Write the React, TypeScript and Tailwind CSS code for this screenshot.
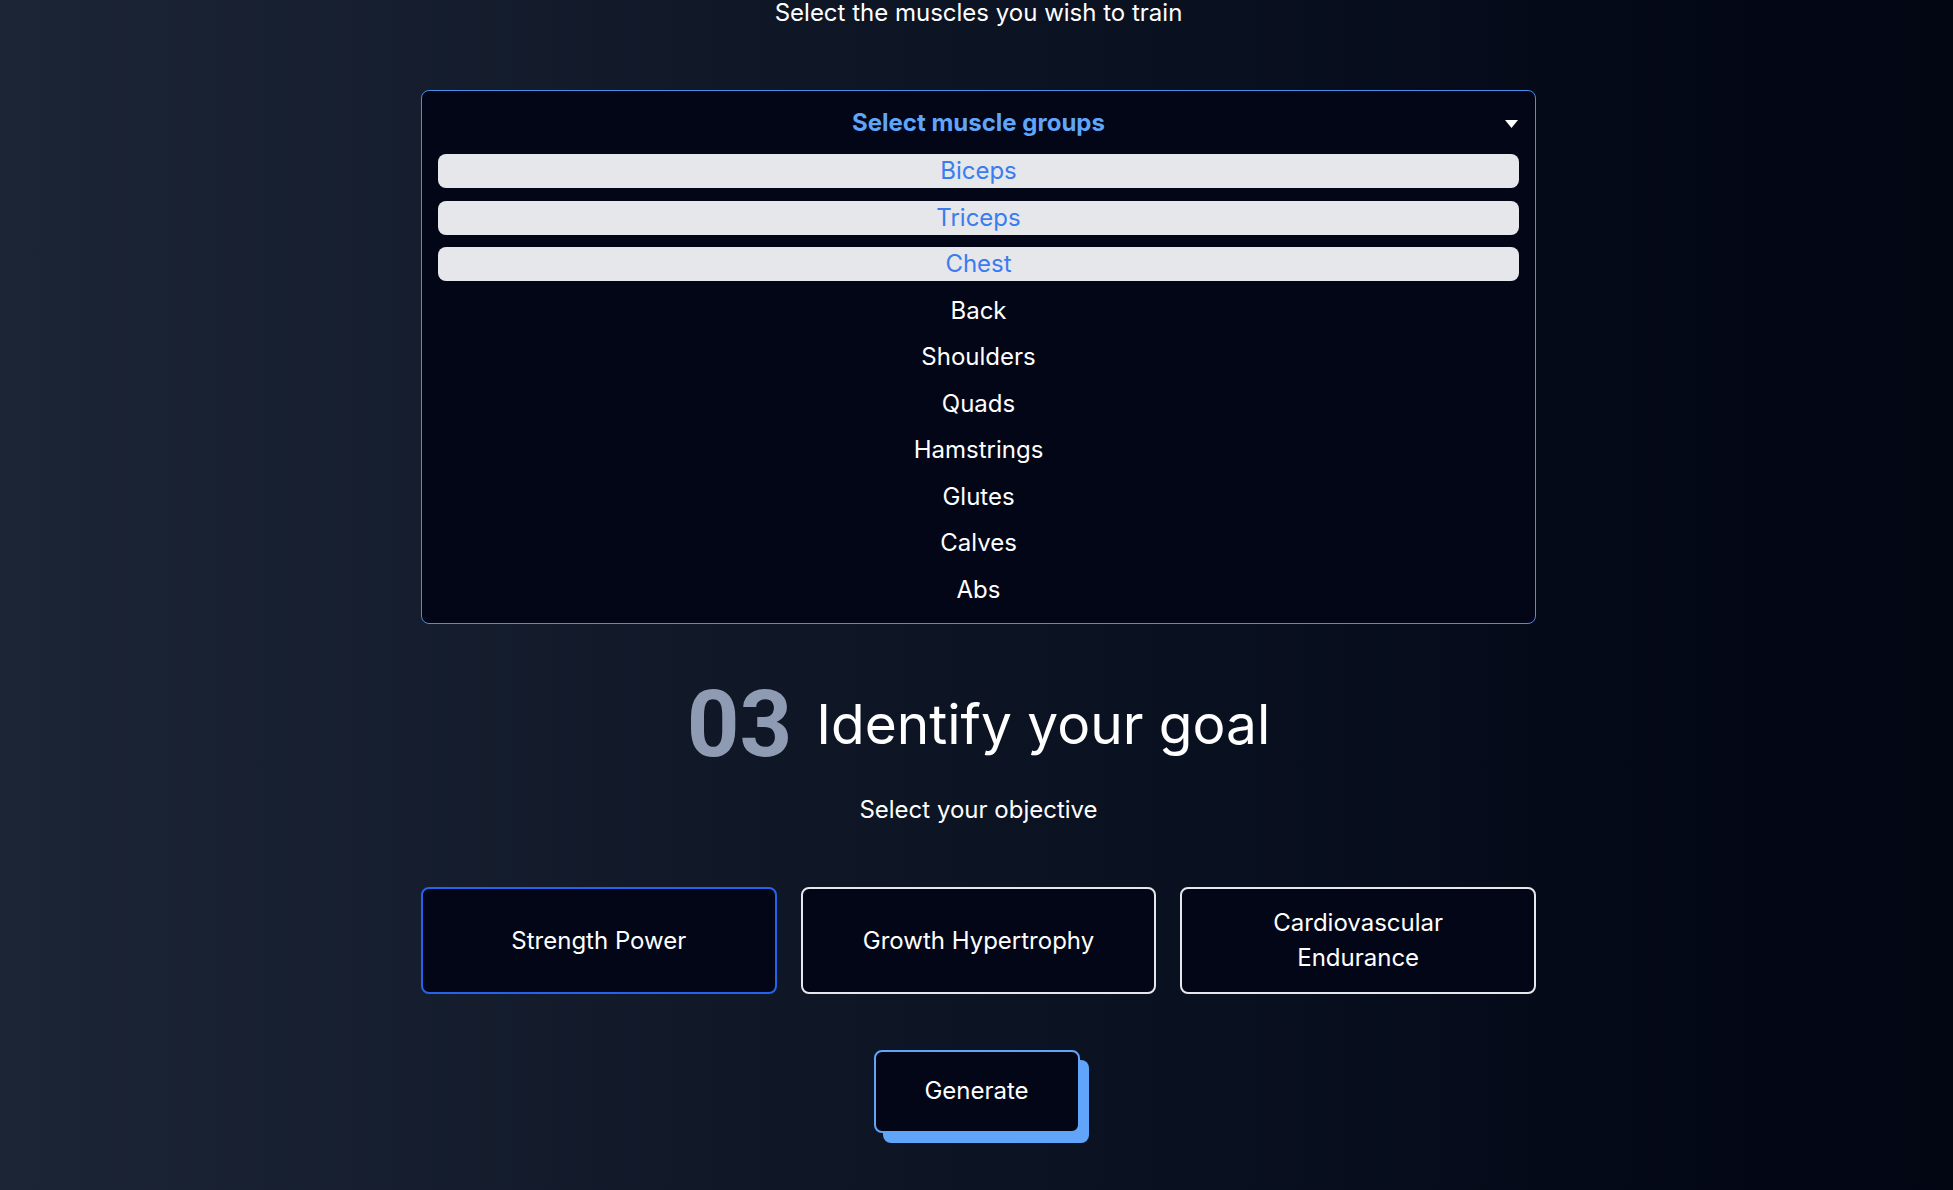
import React, { useState } from 'react';

const muscles = [
  'Biceps',
  'Triceps',
  'Chest',
  'Back',
  'Shoulders',
  'Quads',
  'Hamstrings',
  'Glutes',
  'Calves',
  'Abs',
];

const goals = ['Strength Power', 'Growth Hypertrophy', 'Cardiovascular Endurance'];

export default function App() {
  const [selected, setSelected] = useState<string[]>(['Biceps', 'Triceps', 'Chest']);
  const [goal, setGoal] = useState('Strength Power');

  function toggleMuscle(name: string) {
    setSelected((prev) =>
      prev.includes(name) ? prev.filter((m) => m !== name) : [...prev, name]
    );
  }

  return (
    <div
      className="h-[1190px] overflow-hidden bg-gradient-to-r from-[#1c2536] to-[#020512] pl-1 text-white"
      style={{ fontFamily: 'Inter, "Open Sans", sans-serif' }}
    >
      <div className="w-[1115px] mx-auto flex flex-col items-center">
        <p className="mt-[-1px] text-2xl leading-7 text-center">
          Select the muscles you wish to train
        </p>

        {/* Muscle dropdown */}
        <div className="mt-[63px] w-full rounded-lg border border-[#4b8ee6] bg-[#020617] px-4 pt-4 pb-4">
          <div className="grid grid-cols-[1fr_auto_1fr] items-center h-8">
            <span />
            <span className="text-2xl font-bold text-[#60a5fa]">Select muscle groups</span>
            <svg
              className="justify-self-end mr-[1px] mt-[2px]"
              width="13"
              height="8"
              viewBox="0 0 13 8"
              fill="white"
            >
              <path d="M0 0 H13 L6.5 8 Z" />
            </svg>
          </div>
          <div className="mt-[15px] flex flex-col gap-[12.5px]">
            {muscles.map((m) => {
              const on = selected.includes(m);
              return (
                <button
                  key={m}
                  onClick={() => toggleMuscle(m)}
                  className={`h-[34px] w-full rounded-lg text-2xl leading-none flex items-center justify-center ${
                    on ? 'bg-gray-200 text-[#3b7cf0]' : 'text-white'
                  }`}
                >
                  {m}
                </button>
              );
            })}
          </div>
        </div>

        {/* Step 03 */}
        <div className="mt-[53px] h-[96px] flex items-center gap-6">
          <span
            className="text-[92px] font-bold leading-none text-[#8e9bb3]"
            style={{ fontFamily: 'Roboto, Inter, sans-serif' }}
          >
            03
          </span>
          <h2 className="text-[55px] font-normal leading-none">Identify your goal</h2>
        </div>

        <p className="mt-[23px] text-2xl leading-7">Select your objective</p>

        <div className="mt-[63px] w-full grid grid-cols-3 gap-6">
          {goals.map((g) => (
            <button
              key={g}
              onClick={() => setGoal(g)}
              className={`h-[107px] rounded-lg border-2 bg-[#020617] px-10 text-2xl leading-[35px] text-white ${
                goal === g ? 'border-[#2563eb]' : 'border-gray-200'
              }`}
            >
              {g}
            </button>
          ))}
        </div>

        <button className="mt-[56px] mr-1 h-[83px] w-[206px] rounded-lg border-2 border-[#60a5fa] bg-[#020617] text-2xl text-white shadow-[9px_10px_0_0_#60a5fa]">
          Generate
        </button>
      </div>
    </div>
  );
}
